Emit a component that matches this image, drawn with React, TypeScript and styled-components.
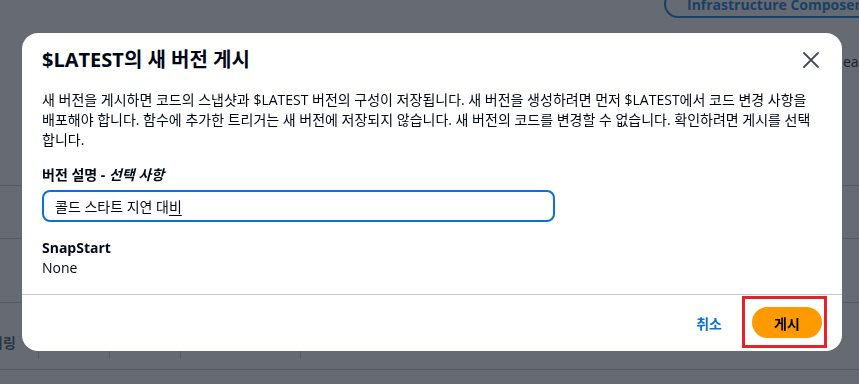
import React from "react";
import styled, { createGlobalStyle } from "styled-components";

const GlobalStyle = createGlobalStyle`
  html, body {
    margin: 0;
    padding: 0;
    width: 859px;
    height: 384px;
    overflow: hidden;
    background: #ffffff;
    font-family: "Open Sans", "Noto Sans CJK KR", sans-serif;
    color: #000716;
  }
`;

/* ---------- background page ---------- */

const Page = styled.div`
  width: 859px;
  height: 384px;
  overflow: hidden;
  display: flex;
  flex-direction: column;
`;

const TopBar = styled.div`
  height: 52px;
  padding-left: 664px;
  display: flex;
  align-items: flex-start;
  white-space: nowrap;
`;

const OutlineButton = styled.div`
  margin-top: -10px;
  height: 24px;
  padding: 0 21px;
  border: 2px solid #0972d3;
  border-radius: 20px;
  display: inline-flex;
  align-items: center;
  font-size: 14px;
  font-weight: 700;
  color: #0972d3;
  white-space: nowrap;
`;

const InfoRow = styled.div`
  height: 133px;
  padding-left: 843px;
  font-size: 14px;
  line-height: 20px;
  white-space: nowrap;
  color: #000716;
`;

const PlainRow = styled.div<{ $h: number }>`
  height: ${(p) => p.$h}px;
  border-top: 1px solid #c6c6cd;
`;

const TableHead = styled.div`
  height: 66px;
  border-top: 1px solid #c6c6cd;
  border-bottom: 1px solid #c6c6cd;
  display: flex;
  align-items: flex-end;
  overflow: hidden;
`;

const HeadCell = styled.div<{ $w: number; $indent?: number }>`
  width: ${(p) => p.$w}px;
  flex: none;
  height: 26px;
  margin-bottom: 10px;
  padding-bottom: 9px;
  border-right: 1px solid #c6c6cd;
  display: flex;
  align-items: center;
  padding-left: 16px;
  text-indent: ${(p) => p.$indent ?? 0}px;
  font-size: 14px;
  font-weight: 700;
  color: #414d5c;
  white-space: nowrap;
  box-sizing: border-box;
`;

const Overlay = styled.div`
  position: fixed;
  inset: 0;
  background: rgba(35, 43, 55, 0.7);
`;

/* ---------- modal ---------- */

const Modal = styled.div`
  position: fixed;
  left: 22px;
  top: 33px;
  width: 820px;
  height: 318px;
  background: #ffffff;
  border-radius: 16px;
  display: flex;
  flex-direction: column;
  box-sizing: border-box;
`;

const Header = styled.div`
  padding: 15px 23px 0 20px;
  display: flex;
  align-items: center;
  justify-content: space-between;
`;

const Title = styled.h2`
  margin: 0;
  font-size: 20px;
  line-height: 24px;
  font-weight: 700;
  color: #000716;
`;

const CloseButton = styled.button`
  border: none;
  background: none;
  padding: 0;
  width: 16px;
  height: 16px;
  display: flex;
  color: #414d5c;
  cursor: pointer;
`;

const Body = styled.div`
  padding: 18px 20px 16px 20px;
  display: flex;
  flex-direction: column;
  border-bottom: 1px solid #c6c6cd;
`;

const Paragraph = styled.p`
  margin: 0;
  font-size: 14px;
  line-height: 20px;
  color: #000716;
`;

const Label = styled.div`
  margin-top: 15px;
  font-size: 14px;
  line-height: 20px;
  font-weight: 700;
  color: #000716;
`;

const Em = styled.em`
  font-style: italic;
`;

const TextBox = styled.div`
  margin-top: 5px;
  width: 513px;
  height: 32px;
  box-sizing: border-box;
  border: 2px solid #0972d3;
  border-radius: 8px;
  padding: 0 11px;
  display: flex;
  align-items: center;
  font-size: 14px;
  color: #000716;
  white-space: pre;
`;

const Composing = styled.span`
  text-decoration: underline;
  text-underline-offset: 3px;
`;

const FieldTitle = styled.div`
  margin-top: 16px;
  font-size: 14px;
  line-height: 20px;
  font-weight: 700;
  color: #000716;
`;

const FieldValue = styled.div`
  font-size: 14px;
  line-height: 20px;
  color: #000716;
`;

const Footer = styled.div`
  flex: 1;
  padding: 12px 20px 0 0;
  display: flex;
  justify-content: flex-end;
  align-items: flex-start;
  gap: 10px;
`;

const LinkButton = styled.button`
  border: none;
  background: none;
  height: 31px;
  padding: 0 20px;
  font-family: inherit;
  font-size: 14px;
  font-weight: 700;
  color: #0972d3;
  cursor: pointer;
`;

const Highlight = styled.div`
  position: relative;
  display: flex;
`;

const HighlightFrame = styled.span`
  position: absolute;
  left: -10px;
  right: -5px;
  top: -11px;
  bottom: -10px;
  border: 3px solid #e8202a;
  pointer-events: none;
`;

const PrimaryButton = styled.button`
  border: none;
  height: 31px;
  width: 70px;
  border-radius: 20px;
  background: #ff9900;
  font-family: inherit;
  font-size: 14px;
  font-weight: 700;
  color: #000716;
  cursor: pointer;
`;

export default function App() {
  return (
    <>
      <GlobalStyle />
      <Page>
        <TopBar>
          <OutlineButton>Infrastructure Composer로 내보내기</OutlineButton>
        </TopBar>
        <InfoRow>eas</InfoRow>
        <PlainRow $h={52} />
        <PlainRow $h={63} />
        <TableHead>
          <HeadCell $w={39} $indent={-26}>리링</HeadCell>
          <HeadCell $w={71}>버전</HeadCell>
          <HeadCell $w={71}>별칭</HeadCell>
          <HeadCell $w={120}>설명</HeadCell>
        </TableHead>
      </Page>
      <Overlay />
      <Modal role="dialog" aria-label="$LATEST의 새 버전 게시">
        <Header>
          <Title>$LATEST의 새 버전 게시</Title>
          <CloseButton aria-label="닫기">
            <svg width="16" height="16" viewBox="0 0 16 16" fill="none">
              <path
                d="M1 1L15 15M15 1L1 15"
                stroke="currentColor"
                strokeWidth="1.8"
                strokeLinecap="round"
              />
            </svg>
          </CloseButton>
        </Header>
        <Body>
          <Paragraph>
            새 버전을 게시하면 코드의 스냅샷과 $LATEST 버전의 구성이 저장됩니다. 새 버전을 생성하려면 먼저 $LATEST에서 코드 변경 사항을
            배포해야 합니다. 함수에 추가한 트리거는 새 버전에 저장되지 않습니다. 새 버전의 코드를 변경할 수 없습니다. 확인하려면 게시를 선택
            합니다.
          </Paragraph>
          <Label>
            버전 설명 - <Em>선택 사항</Em>
          </Label>
          <TextBox role="textbox">
            콜드 스타트 지연 대<Composing>비</Composing>
          </TextBox>
          <FieldTitle>SnapStart</FieldTitle>
          <FieldValue>None</FieldValue>
        </Body>
        <Footer>
          <LinkButton>취소</LinkButton>
          <Highlight>
            <PrimaryButton>게시</PrimaryButton>
            <HighlightFrame />
          </Highlight>
        </Footer>
      </Modal>
    </>
  );
}
